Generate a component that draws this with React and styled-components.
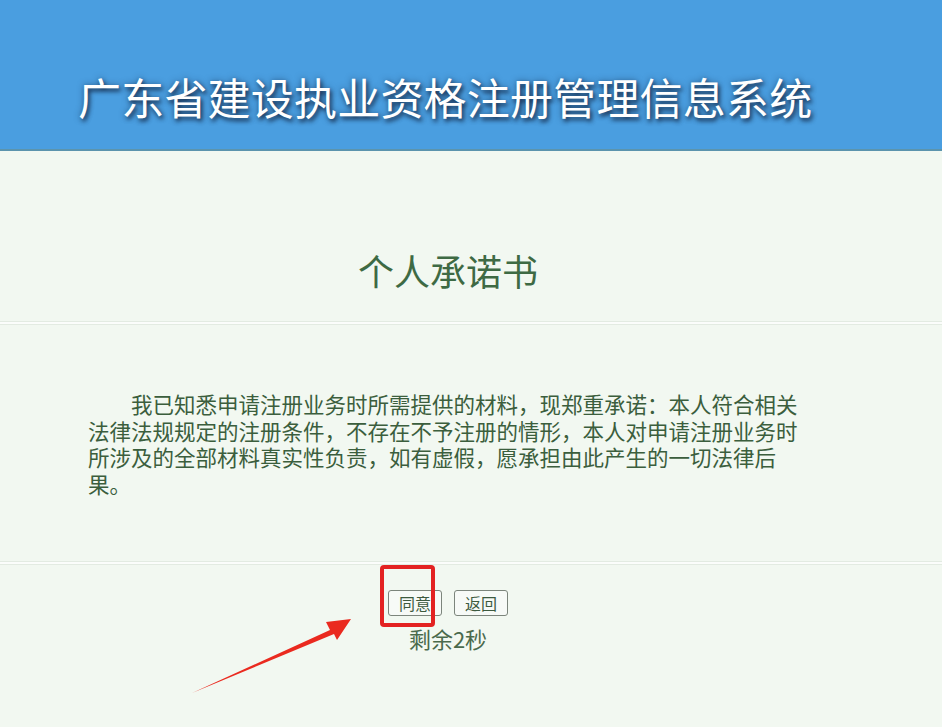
import React from 'react';
import styled, { createGlobalStyle } from 'styled-components';

const GlobalStyle = createGlobalStyle`
  html, body {
    margin: 0;
    padding: 0;
    background: #f2f8f1;
    font-family: "Noto Sans CJK SC", "Noto Sans", sans-serif;
  }
`;

const Page = styled.div`
  position: relative;
  width: 942px;
  height: 727px;
  overflow: hidden;
  background: #f2f8f1;
`;

const Header = styled.header`
  height: 149px;
  background: #4a9ee0;
  border-bottom: 2px solid #5b94ad;
  display: flex;
  align-items: center;
  padding-left: 78px;
  box-sizing: content-box;
`;

const SiteTitle = styled.h1`
  margin: 0;
  margin-top: 42px;
  font-size: 43px;
  font-weight: 400;
  letter-spacing: 0.2px;
  color: #ffffff;
  text-shadow: 2px 3px 4px rgba(20, 40, 70, 0.85), 0 0 6px rgba(20, 40, 70, 0.5);
`;

const Centered = styled.div`
  width: 896px;
  display: flex;
  flex-direction: column;
  align-items: center;
`;

const TitleRow = styled(Centered)`
  height: 170px;
  justify-content: center;
`;

const DocTitle = styled.h2`
  margin: 0;
  margin-top: 68px;
  font-size: 36px;
  font-weight: 400;
  color: #3e6a44;
`;

const Divider = styled.hr`
  margin: 0;
  height: 2px;
  border: none;
  border-top: 1px solid #e3ebe2;
  border-bottom: 1px solid #e3ebe2;
  background: #fbfdfb;
`;

const Body = styled.div`
  height: 236px;
  padding: 66px 0 0 88px;
  box-sizing: border-box;
`;

const Pledge = styled.p`
  margin: 0;
  width: 722px;
  font-size: 21.5px;
  line-height: 26.5px;
  text-indent: 2em;
  color: #3b5e3d;
`;

const Actions = styled(Centered)`
  padding-top: 25px;
`;

const ButtonRow = styled.div`
  display: flex;
  gap: 12px;
`;

const Button = styled.button`
  width: 54px;
  height: 26px;
  padding: 0;
  font-family: inherit;
  font-size: 16px;
  color: #3d5a3f;
  background: #f7faf7;
  border: 1px solid #7c857c;
  border-radius: 3px;
  cursor: pointer;
`;

const Countdown = styled.div`
  margin-top: 8px;
  font-size: 22px;
  line-height: 28px;
  color: #4a6a4c;
`;

const Highlight = styled.div`
  position: absolute;
  left: 380px;
  top: 565px;
  width: 47px;
  height: 54px;
  border: 4px solid #e32222;
  border-radius: 4px;
`;

const Arrow = styled.svg`
  position: absolute;
  left: 185px;
  top: 612px;
`;

export default function App() {
  return (
    <>
      <GlobalStyle />
      <Page>
        <Header>
          <SiteTitle>广东省建设执业资格注册管理信息系统</SiteTitle>
        </Header>
        <TitleRow>
          <DocTitle>个人承诺书</DocTitle>
        </TitleRow>
        <Divider />
        <Body>
          <Pledge>
            我已知悉申请注册业务时所需提供的材料，现郑重承诺：本人符合相关法律法规规定的注册条件，不存在不予注册的情形，本人对申请注册业务时所涉及的全部材料真实性负责，如有虚假，愿承担由此产生的一切法律后果。
          </Pledge>
        </Body>
        <Divider />
        <Actions>
          <ButtonRow>
            <Button>同意</Button>
            <Button>返回</Button>
          </ButtonRow>
          <Countdown>剩余2秒</Countdown>
        </Actions>
        <Highlight />
        <Arrow width="175" height="90" viewBox="0 0 175 90">
          <path d="M7 81 L145 18 L141 10 L166 7 L152 28 L149 22 Z" fill="#ea2a1f" />
        </Arrow>
      </Page>
    </>
  );
}
